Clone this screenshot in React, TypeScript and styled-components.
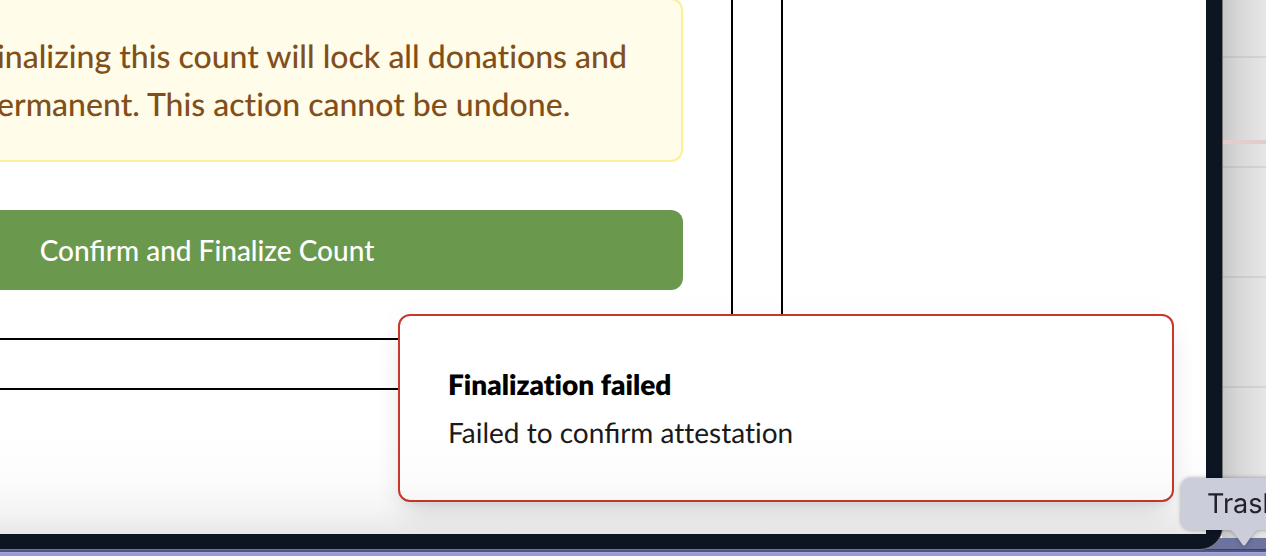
import React from "react";
import styled, { createGlobalStyle } from "styled-components";

const GlobalStyle = createGlobalStyle`
  *, *::before, *::after { box-sizing: border-box; }
  body { margin: 0; overflow: hidden; font-family: Lato, "Liberation Sans", sans-serif; text-rendering: geometricPrecision; }
  p, h2 { margin: 0; }
`;

const Desktop = styled.div`
  position: relative;
  display: grid;
  grid-template-columns: minmax(0, 1fr) 44px;
  grid-template-rows: minmax(0, 1fr) 11px 7px;
  min-height: 100vh;
  overflow: hidden;
`;

const Paper = styled.div`
  grid-area: 1 / 2 / 2 / 3;
  background:
    linear-gradient(#e5cccc, #e5cccc) 0 140px / 100% 4px no-repeat,
    repeating-linear-gradient(transparent 0 56px, rgba(0, 0, 0, 0.07) 56px 58px, transparent 58px 110px),
    linear-gradient(90deg, #c6c6c6, #d8d8d8 40%, #e6e6e6);
`;

const Dock = styled.div`
  grid-area: 2 / 1 / 4 / 3;
  background: linear-gradient(#6c739f 0 11px, #3f4060 11px 12px, #50547e 12px 14px, #a3a9df 14px 15px, #969dce 15px);
`;

const AppWindow = styled.div`
  grid-area: 1 / 1 / 3 / 2;
  z-index: 1;
  display: flex;
  padding: 0 16px 15px 0;
  overflow: hidden;
  background: #0d1422;
  border-radius: 0 0 22px 0;
  box-shadow: 0 0 0 1px #77777b;
`;

const Page = styled.main`
  position: relative;
  flex: 1;
  min-width: 0;
  overflow: hidden;
  background: #fff;

  &::after {
    content: "";
    position: absolute;
    inset: auto 0 0;
    height: 100px;
    background: linear-gradient(transparent, rgba(0, 0, 0, 0.01) 45%, rgba(0, 0, 0, 0.04) 75%, rgba(0, 0, 0, 0.09));
    pointer-events: none;
  }
`;

const OuterCard = styled.section`
  margin: -2px 423px 0 -369px;
  padding: 0 48px 48px;
  border: solid #000;
  border-width: 0 2px 2px;
`;

const InnerCard = styled.div`
  display: flex;
  flex-direction: column;
  gap: 48px;
  padding: 0 48px 48px;
  border: solid #000;
  border-width: 0 2px 2px;
`;

const Notice = styled.p`
  padding: 32px 32px 32px 246px;
  border: 2px solid #fbf095;
  border-radius: 12px;
  background: #fffdea;
  color: #824f1b;
  font-size: 32px;
  font-weight: 500;
  font-variant-ligatures: none;
  line-height: 48px;
  white-space: nowrap;
`;

const ConfirmButton = styled.button`
  height: 80px;
  border: 0;
  border-radius: 12px;
  background: #6a994e;
  color: #fff;
  font: 500 28px/40px Lato, "Liberation Sans", sans-serif;
`;

const Toast = styled.div`
  position: absolute;
  right: 32px;
  bottom: 32px;
  width: 776px;
  display: flex;
  flex-direction: column;
  gap: 8px;
  padding: 48px;
  border: 2px solid #c9372c;
  border-radius: 12px;
  background: #fff;
  box-shadow: 0 20px 30px -6px rgba(0, 0, 0, 0.1), 0 8px 12px -8px rgba(0, 0, 0, 0.1), 0 0 30px rgba(0, 0, 0, 0.03);
  font-size: 28px;
  line-height: 40px;
`;

const ToastTitle = styled.h2`
  color: #000;
  font-size: 28px;
  font-weight: 800;
  font-variant-ligatures: none;
`;

const ToastText = styled.p`
  color: #1a1a1a;
`;

const Unligated = styled.span`
  font-variant-ligatures: none;
`;

const Tooltip = styled.div`
  position: absolute;
  z-index: 2;
  right: -41px;
  bottom: 26px;
  width: 126px;
  padding: 6px 26px;
  border-radius: 10px;
  background: #cccddb;
  color: #222226;
  font: 400 27px/40px Inter, "Liberation Sans", sans-serif;
  filter: drop-shadow(0 0 2px rgba(0, 0, 0, 0.35));
`;

const TooltipArrow = styled.svg`
  position: absolute;
  top: 100%;
  left: 48px;
  display: block;
`;

export default function App() {
  return (
    <>
      <GlobalStyle />
      <Desktop>
        <Paper />
        <Dock />
        <AppWindow>
          <Page>
            <OuterCard>
              <InnerCard>
                <Notice>
                  Finalizing this count will lock all donations and
                  <br />
                  permanent. This action cannot be undone.
                </Notice>
                <ConfirmButton type="button">Confirm and Finalize Count</ConfirmButton>
              </InnerCard>
            </OuterCard>
            <Toast role="alert">
              <ToastTitle>Finalization failed</ToastTitle>
              <ToastText>
                Failed to confirm <Unligated>attestation</Unligated>
              </ToastText>
            </Toast>
          </Page>
        </AppWindow>
        <Tooltip role="tooltip">
          Trash
          <TooltipArrow width="30" height="17" viewBox="0 0 30 17" aria-hidden="true">
            <path d="M0 0C3 0 4 2 6 4L13 14Q15 17 17 14L24 4C26 2 27 0 30 0Z" fill="#cccddb" />
          </TooltipArrow>
        </Tooltip>
      </Desktop>
    </>
  );
}
